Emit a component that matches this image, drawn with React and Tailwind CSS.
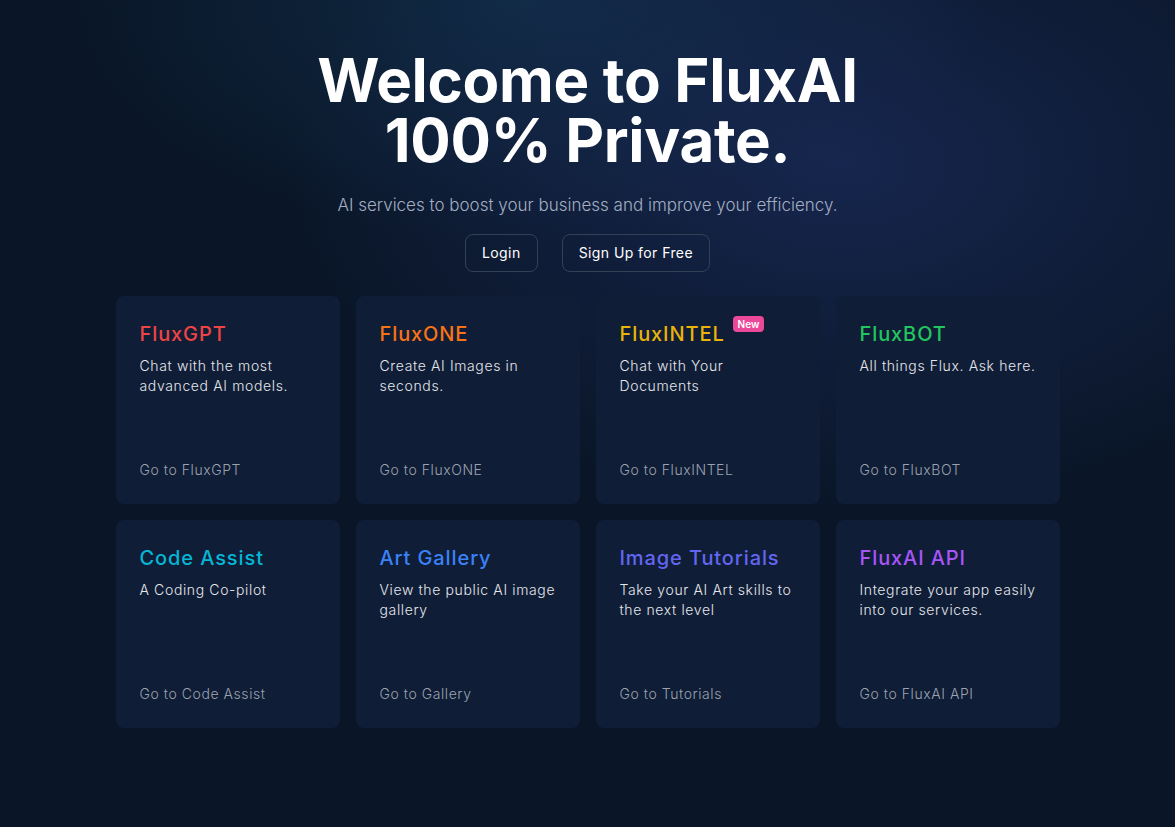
const cards = [
  { title: "FluxGPT", color: "text-[#ef4444]", desc: ["Chat with the most", "advanced AI models."], link: "Go to FluxGPT" },
  { title: "FluxONE", color: "text-[#f97316]", desc: ["Create AI Images in", "seconds."], link: "Go to FluxONE" },
  { title: "FluxINTEL", color: "text-[#eab308]", desc: ["Chat with Your", "Documents"], link: "Go to FluxINTEL", isNew: true },
  { title: "FluxBOT", color: "text-[#22c55e]", desc: ["All things Flux. Ask here."], link: "Go to FluxBOT" },
  { title: "Code Assist", color: "text-[#06b6d4]", desc: ["A Coding Co-pilot"], link: "Go to Code Assist" },
  { title: "Art Gallery", color: "text-[#3b82f6]", desc: ["View the public AI image", "gallery"], link: "Go to Gallery" },
  { title: "Image Tutorials", color: "text-[#6366f1]", desc: ["Take your AI Art skills to", "the next level"], link: "Go to Tutorials" },
  { title: "FluxAI API", color: "text-[#a855f7]", desc: ["Integrate your app easily", "into our services."], link: "Go to FluxAI API" },
];

function ServiceCard({ card }) {
  return (
    <a
      href="#"
      className="flex h-[208px] flex-col justify-between rounded-lg bg-[#0f1d37] p-6 transition hover:bg-[#13233f]"
    >
      <div>
        <div className="flex items-start gap-2">
          <h2 className={`text-xl leading-7 font-medium tracking-[0.045em] ${card.color}`}>{card.title}</h2>
          {card.isNew && (
            <span className="-mt-1 rounded bg-[#ec4899] px-[5px] py-[3px] text-[10px] leading-none font-semibold text-white">
              New
            </span>
          )}
        </div>
        <p className="mt-2 text-sm leading-5 font-light tracking-[0.045em] whitespace-nowrap text-[#e5e7eb]">
          {card.desc.map((line) => (
            <span key={line} className="block">
              {line}
            </span>
          ))}
        </p>
      </div>
      <p className="text-sm leading-5 font-light tracking-[0.04em] text-[#9ca3af]">{card.link}</p>
    </a>
  );
}

export default function App() {
  return (
    <div className="min-h-screen bg-[#0a1628] bg-[radial-gradient(ellipse_560px_340px_at_72%_20%,rgba(30,48,102,0.6),transparent),radial-gradient(ellipse_460px_240px_at_45%_0%,rgba(22,66,98,0.45),transparent)] font-['Inter',sans-serif] text-white">
      <main className="flex flex-col items-center pt-[50px] pb-24">
        <h1 className="text-center text-[60px] leading-[60px] font-bold tracking-[-0.005em]">
          Welcome to FluxAI
          <br />
          100% Private.
        </h1>
        <p className="mt-[21px] text-[17px] leading-7 font-light text-[#a3aec2]">
          AI services to boost your business and improve your efficiency.
        </p>
        <div className="mt-[15px] flex gap-6">
          <button className="rounded-lg border border-[#334155] px-4 py-2 text-sm leading-5 tracking-[0.03em] text-white hover:bg-white/5">
            Login
          </button>
          <button className="rounded-lg border border-[#334155] px-4 py-2 text-sm leading-5 tracking-[0.03em] text-white hover:bg-white/5">
            Sign Up for Free
          </button>
        </div>
        <div className="mt-6 grid w-[944px] grid-cols-4 gap-4">
          {cards.map((card) => (
            <ServiceCard key={card.title} card={card} />
          ))}
        </div>
      </main>
    </div>
  );
}
